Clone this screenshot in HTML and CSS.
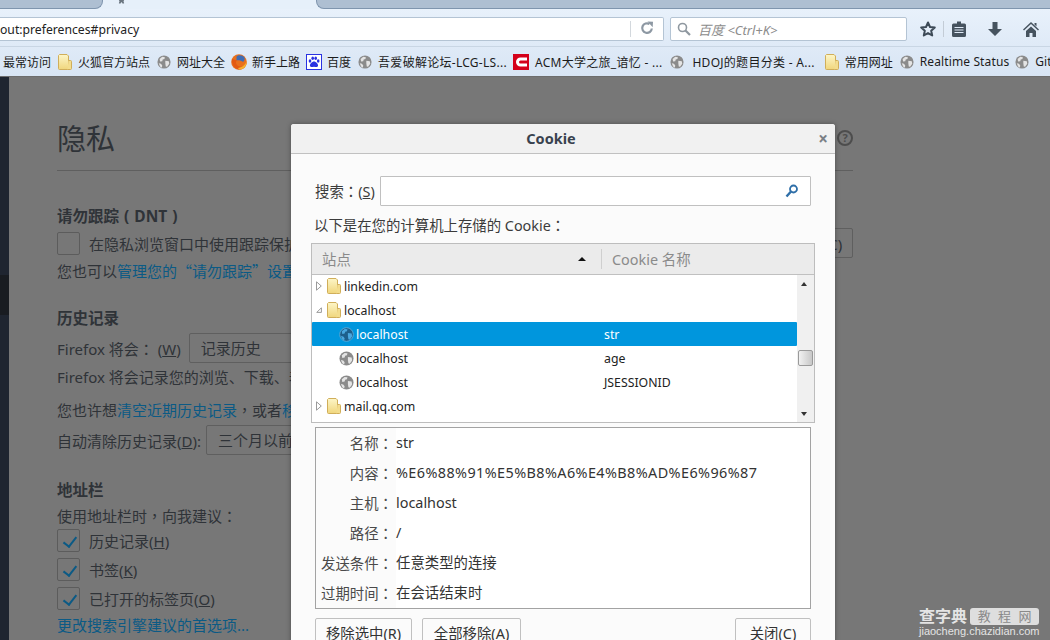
FILE: index.html
```html
<!DOCTYPE html>
<html lang="en">

<head>
    <meta charset="UTF-8">
    <title>Cookie</title>
    <link rel="stylesheet" href="styles.css">
</head>

<body>
    <svg class="defs" width="0" height="0">
        <defs>
            <linearGradient id="folderFill" x1="0" y1="0" x2="0" y2="1">
                <stop offset="0" stop-color="#fdf6c8" />
                <stop offset="1" stop-color="#f0d67c" />
            </linearGradient>
            <symbol id="folder" viewBox="0 0 14 16">
                <path d="M1.5.5h7.5l1.5 1.5v12.5a1 1 0 0 1-1 1h-8a1 1 0 0 1-1-1V1.500z" fill="url(#folderFill)" stroke="#d0ae5a" />
                <path d="M10.500 6.500h2a1 1 0 0 1 1 1v7a1 1 0 0 1-1 1h-3" fill="#f3dd8e" stroke="#d0ae5a" />
            </symbol>
            <symbol id="globe" viewBox="0 0 16 16">
                <circle cx="8" cy="8" r="7.500" fill="#8b8b8b" />
                <path d="M3 4.500 6 2l3 .5-.5 2-2 .5-.5 2-2.500.5zM9.500 6.500l4 .5.500 3-2.500 3.500-1.500-.5-.5-3.500zM2 9.500l2.500.5 1.500 2-.5 2.500-2-1.500z" fill="#e4e4e4" />
            </symbol>
            <symbol id="globe-on" viewBox="0 0 16 16">
                <circle cx="8" cy="8" r="7.300" fill="#1d5f8c" stroke="#5aa9d6" />
                <path d="M3 4.500 6 2l3 .5-.5 2-2 .5-.5 2-2.500.5zM9.500 6.500l4 .5.500 3-2.500 3.500-1.500-.5-.5-3.500zM2 9.500l2.500.5 1.500 2-.5 2.500-2-1.500z" fill="#4aa8e0" />
            </symbol>
            <symbol id="fox" viewBox="0 0 16 16">
                <circle cx="8" cy="8" r="7.800" fill="#e8701d" />
                <path d="M5.500 2.500C7 .8 11.500.8 13.500 3.500c.6 1.500 0 3.500-1.500 4.500-1.500-1.200-4-2-6.500-1.500z" fill="#3f6cb4" />
                <path d="M1 5c-.5 5 2.500 10.500 7.500 10.500S15.800 11 15.600 7.500c-.6 3-2.600 5-5.600 5-2.500 0-5-1.500-5-4 0-1 .5-1.800 1-2.300C4.500 6 3 5.500 1 5z" fill="#e35a12" />
                <path d="M8.500 15.500c4 0 7-3 7-7 0-.5 0-1-.1-1.500-.9 4.500-5 6.500-8.400 7 .5.800 1 1.500 1.500 1.500z" fill="#f6b12f" />
            </symbol>
            <symbol id="paw" viewBox="0 0 16 16">
                <rect x=".5" y=".5" width="15" height="15" fill="#fff" stroke="#2932e1" />
                <ellipse cx="4" cy="7" rx="1.300" ry="1.800" fill="#2932e1" />
                <ellipse cx="6.700" cy="4.300" rx="1.300" ry="1.800" fill="#2932e1" />
                <ellipse cx="9.700" cy="4.300" rx="1.300" ry="1.800" fill="#2932e1" />
                <ellipse cx="12.200" cy="7" rx="1.300" ry="1.800" fill="#2932e1" />
                <path d="M8 7.500c-2 0-4.500 2.500-4 4.500.5 1.500 2.500 1 4 .8 1.500.2 3.500.7 4-.8.500-2-2-4.500-4-4.500z" fill="#2932e1" />
            </symbol>
            <symbol id="redc" viewBox="0 0 16 16">
                <rect width="16" height="16" fill="#d4001a" />
                <path d="M14 5H7.500a3 3 0 0 0 0 6H14" fill="none" stroke="#fff" stroke-width="3" />
            </symbol>
            <symbol id="tw-closed" viewBox="0 0 6 10">
                <path d="M.5.8 5.300 5 .5 9.200z" fill="#fff" stroke="#9a9a9a" />
            </symbol>
            <symbol id="tw-open" viewBox="0 0 7 7">
                <path d="M6.300.9v5.400H.9z" fill="#fff" stroke="#8a8a8a" />
            </symbol>
        </defs>
    </svg>

    <div class="browser">
        <div class="tabstrip">
            <div class="tab tab-left"></div>
            <div class="tab-active">
                <svg class="pin" viewBox="0 0 10 6"><path d="M1 0h8L8 2l1 3-2 .5L5 3 3 5.500 1 5l1-3z" /></svg>
            </div>
            <div class="tab tab-right"></div>
        </div>

        <div class="navbar">
            <div class="urlbar">
                <span class="url">out:preferences#privacy</span>
                <span class="reload">
                    <svg viewBox="0 0 14 14" width="14" height="14"><path d="M11.800 7.500A4.800 4.800 0 1 1 9.500 3" fill="none" stroke="#8d98a3" stroke-width="2.200" /><path d="M7.500.5 13 .8l-.3 5.400z" fill="#8d98a3" /></svg>
                </span>
            </div>
            <div class="searchbar">
                <svg viewBox="0 0 14 14" width="14" height="14"><circle cx="5.500" cy="5.500" r="4" fill="none" stroke="#8f98a0" stroke-width="1.600" /><path d="m8.500 8.500 4.500 4.500" stroke="#8f98a0" stroke-width="2.200" /></svg>
                <span class="search-hint">百度 &lt;Ctrl+K&gt;</span>
            </div>
            <div class="tools">
                <svg class="tool-star" viewBox="0 0 16 16" width="16" height="16"><path d="m8 1.500 2 4.500 4.800.5-3.600 3.200 1 4.800L8 12.100l-4.200 2.400 1-4.800L1.200 6.500 6 6z" fill="none" stroke="#3d4a57" stroke-width="2" stroke-linejoin="round" /></svg>
                <span class="tool-sep"></span>
                <svg class="tool-list" viewBox="0 0 14 16" width="14" height="16"><path d="M5 .5h4v2h3.500a1.500 1.500 0 0 1 1.500 1.500v10.500a1.500 1.500 0 0 1-1.500 1.500h-11A1.500 1.500 0 0 1 0 14.500V4a1.500 1.500 0 0 1 1.500-1.500H5z" fill="#46535f" /><path d="M2.500 6.500h9M2.500 9h9M2.500 11.500h9" fill="none" stroke="#dfeaf7" stroke-width="1.200" /></svg>
                <svg class="tool-down" viewBox="0 0 14 14" width="14" height="14"><path d="M4.500 0h5v7H14l-7 7-7-7h4.500z" fill="#46535f" /></svg>
                <svg class="tool-home" viewBox="0 0 16 15" width="16" height="15"><path d="M8 0 0 7.500l1 1L8 2l7 6.500 1-1zM3 9l5-4.500L13 9v6H9.500v-4h-3v4H3zM11.500 1H13.500v3.500l-2-2z" fill="#46535f" /></svg>
            </div>
        </div>

        <div class="bookmarks">
            <span class="mark">最常访问</span>
            <span class="mark"><svg class="icon-folder"><use href="#folder" /></svg>火狐官方站点</span>
            <span class="mark"><svg class="icon-globe"><use href="#globe" /></svg>网址大全</span>
            <span class="mark mark-snug"><svg class="icon-square"><use href="#fox" /></svg>新手上路</span>
            <span class="mark mark-snug"><svg class="icon-square"><use href="#paw" /></svg>百度</span>
            <span class="mark mark-long"><svg class="icon-globe"><use href="#globe" /></svg>吾爱破解论坛-LCG-LS...</span>
            <span class="mark mark-long mark-red"><svg class="icon-square"><use href="#redc" /></svg>ACM大学之旅_谙忆 - ...</span>
            <span class="mark mark-long mark-hdoj"><svg class="icon-globe"><use href="#globe" /></svg>HDOJ的题目分类 - A...</span>
            <span class="mark mark-used"><svg class="icon-folder"><use href="#folder" /></svg>常用网址</span>
            <span class="mark mark-status"><svg class="icon-globe"><use href="#globe" /></svg>Realtime Status</span>
            <span class="mark mark-git"><svg class="icon-globe"><use href="#globe" /></svg>GitHub</span>
        </div>

        <div class="content">
            <div class="sidebar">
                <div class="sidebar-active"></div>
            </div>
            <div class="prefs">
                <div class="prefs-head">
                    <h1>隐私</h1>
                    <span class="help">?</span>
                </div>

                <h2 class="h-dnt">请勿跟踪 ( DNT )</h2>
                <div class="row row-dnt">
                    <label class="check-label"><span class="check"></span>在隐私浏览窗口中使用跟踪保护</label>
                    <button class="pref-btn">更改拦截列表(C)</button>
                </div>
                <p class="line line-note">您也可以<a>管理您的<span class="qt">“</span>请勿跟踪<span class="qt">”</span>设置</a></p>

                <h2 class="h-section">历史记录</h2>
                <div class="row row-history">
                    <span>Firefox 将会<span class="pn">：</span> (<u>W</u>)</span>
                    <span class="select">记录历史</span>
                </div>
                <p class="line line-a">Firefox 将会记录您的浏览、下载、表单和搜索历史</p>
                <p class="line line-b">您也许想<a>清空近期历史记录</a><span class="pn">，</span>或者<a>移除单个 Cookie</a></p>
                <div class="row row-clear">
                    <span>自动清除历史记录(<u>D</u>):</span>
                    <span class="select select-clear">三个月以前</span>
                </div>

                <h2 class="h-section">地址栏</h2>
                <p class="line line-hint">使用地址栏时<span class="pn">，</span>向我建议<span class="pn">：</span></p>
                <label class="check-row first"><span class="check on"></span>历史记录(<u>H</u>)</label>
                <label class="check-row second"><span class="check on"></span>书签(<u>K</u>)</label>
                <label class="check-row third"><span class="check on"></span>已打开的标签页(<u>O</u>)</label>
                <p class="line line-link"><a>更改搜索引擎建议的首选项...</a></p>
            </div>

            <div class="dialog">
                <div class="dialog-title">
                    <span>Cookie</span>
                    <span class="dialog-close">×</span>
                </div>
                <div class="dialog-body">
                    <div class="search-row">
                        <span class="search-label">搜索<span class="pn">：</span>(<u>S</u>)</span>
                        <div class="search-input">
                            <svg viewBox="0 0 14 14" width="14" height="14"><circle cx="8.500" cy="5" r="3.500" fill="none" stroke="#2f6fa8" stroke-width="1.800" /><path d="M6 7.500 1.500 12.500" stroke="#2f6fa8" stroke-width="2.400" /></svg>
                        </div>
                    </div>
                    <p class="cookie-intro">以下是在您的计算机上存储的 Cookie<span class="pn">：</span></p>

                    <div class="tree">
                        <div class="tree-head">
                            <div class="col-site">站点<span class="sort-up"></span></div>
                            <div class="col-name">Cookie 名称</div>
                        </div>
                        <div class="tree-main">
                            <div class="tree-list">
                                <div class="tree-row"><svg class="twisty"><use href="#tw-closed" /></svg><svg class="row-folder"><use href="#folder" /></svg>linkedin.com</div>
                                <div class="tree-row"><svg class="twisty"><use href="#tw-open" /></svg><svg class="row-folder"><use href="#folder" /></svg>localhost</div>
                                <div class="tree-row child selected"><svg class="row-icon"><use href="#globe-on" /></svg><span class="cell-site">localhost</span><span>str</span></div>
                                <div class="tree-row child"><svg class="row-icon"><use href="#globe" /></svg><span class="cell-site">localhost</span><span>age</span></div>
                                <div class="tree-row child"><svg class="row-icon"><use href="#globe" /></svg><span class="cell-site">localhost</span><span>JSESSIONID</span></div>
                                <div class="tree-row"><svg class="twisty"><use href="#tw-closed" /></svg><svg class="row-folder"><use href="#folder" /></svg>mail.qq.com</div>
                            </div>
                            <div class="scroller">
                                <span class="arrow arrow-up"></span>
                                <span class="thumb"></span>
                                <span class="arrow arrow-down"></span>
                            </div>
                        </div>
                    </div>

                    <div class="details">
                        <span class="d-label">名称<span class="pn">：</span></span><span class="d-value">str</span>
                        <span class="d-label">内容<span class="pn">：</span></span><span class="d-value d-long">%E6%88%91%E5%B8%A6%E4%B8%AD%E6%96%87</span>
                        <span class="d-label">主机<span class="pn">：</span></span><span class="d-value">localhost</span>
                        <span class="d-label">路径<span class="pn">：</span></span><span class="d-value">/</span>
                        <span class="d-label">发送条件<span class="pn">：</span></span><span class="d-value">任意类型的连接</span>
                        <span class="d-label">过期时间<span class="pn">：</span></span><span class="d-value">在会话结束时</span>
                    </div>

                    <div class="dialog-buttons">
                        <button class="dlg-btn btn-remove">移除选中(<u>R</u>)</button>
                        <button class="dlg-btn btn-all">全部移除(<u>A</u>)</button>
                        <button class="dlg-btn btn-close">关闭(<u>C</u>)</button>
                    </div>
                </div>
            </div>

            <div class="watermark">
                <div class="wm-top"><span class="wm-name">查字典</span><span class="wm-tag">教 程 网</span></div>
                <div class="wm-url">jiaocheng.chazidian.com</div>
            </div>
        </div>
    </div>
</body>

</html>
```
FILE: styles.css
```css
* {
    box-sizing: border-box;
}

html,
body {
    margin: 0;
    height: 640px;
    overflow: hidden;
}

body {
    font-family: "Noto Sans", "Noto Sans CJK SC", sans-serif;
    font-size: 14px;
    color: #333;
}

.defs {
    position: absolute;
}

/* centred full-width punctuation, quotes at full width */
.pn {
    font-family: "Noto Sans CJK TC", sans-serif;
}

.qt {
    font-family: "Noto Sans CJK SC", sans-serif;
}

.browser {
    width: 1050px;
    height: 640px;
    display: flex;
    flex-direction: column;
    overflow: hidden;
}

/* tabs */
.tabstrip {
    height: 9px;
    display: flex;
    background: #e6f0fa;
}

.tab {
    height: 9px;
    background: #aebfd2;
    border-bottom: 1px solid #7f95ae;
}

.tab-left {
    width: 103px;
    border-right: 1px solid #7f95ae;
    border-bottom-right-radius: 8px;
}

.tab-right {
    flex: 1;
    border-left: 1px solid #7f95ae;
    border-bottom-left-radius: 8px;
}

.tab-active {
    width: 213px;
    padding-left: 14px;
}

.pin {
    display: block;
    width: 9px;
    height: 4px;
    fill: #6b7680;
}

/* address + search */
.navbar {
    height: 38px;
    padding-top: 8px;
    display: flex;
    background: linear-gradient(#e8f1fb, #dfeaf7);
    border-bottom: 1px solid #c9d6e4;
}

.urlbar {
    width: 664px;
    height: 24px;
    display: flex;
    align-items: center;
    justify-content: space-between;
    background: #fff;
    border: 1px solid #b4c4d4;
    border-left: none;
    border-radius: 0 2px 2px 0;
}

.url {
    font-size: 12.2px;
    color: #222;
}

.reload {
    width: 33px;
    height: 16px;
    display: flex;
    justify-content: center;
    border-left: 1px solid #d3d8dd;
}

.searchbar {
    width: 237px;
    height: 24px;
    margin-left: 6px;
    padding-left: 6px;
    display: flex;
    align-items: center;
    gap: 7px;
    background: #fff;
    border: 1px solid #b4c4d4;
    border-radius: 2px;
}

.search-hint {
    font-size: 13px;
    font-style: italic;
    color: #8c8c8c;
}

.tools {
    flex: 1;
    display: flex;
    align-items: center;
    height: 24px;
}

.tool-star {
    margin-left: 13px;
}

.tool-sep {
    width: 1px;
    height: 16px;
    margin-left: 7px;
    background: #c3ccd6;
}

.tool-list {
    margin-left: 8px;
}

.tool-down {
    margin-left: 22px;
}

.tool-home {
    margin-left: 21px;
}

/* bookmarks */
.bookmarks {
    height: 29px;
    padding-left: 3px;
    display: flex;
    align-items: center;
    gap: 7px;
    background: linear-gradient(#dfeaf7, #d8e5f4);
    font-size: 12px;
    color: #1c1c1c;
    white-space: nowrap;
}

.mark {
    display: flex;
    align-items: center;
    gap: 6px;
    flex-shrink: 0;
}

.mark-snug {
    gap: 5px;
    margin-left: -1px;
}

.mark-long {
    letter-spacing: 0.28px;
}

.mark-red {
    margin-left: -1px;
}

.mark-hdoj {
    margin-left: 1px;
    gap: 8px;
}

.mark-used {
    margin-left: 3px;
}

.mark-status {
    letter-spacing: 0.13px;
}

.mark-git {
    margin-left: -1px;
}

.icon-folder {
    width: 14px;
    height: 16px;
}

.icon-globe {
    width: 14px;
    height: 14px;
}

.icon-square {
    width: 16px;
    height: 16px;
}

/* page behind the dialog */
.content {
    position: relative;
    flex: 1;
    display: flex;
    background: #777;
    border-top: 1px solid #6d6d6d;
    overflow: hidden;
}

.sidebar {
    width: 9px;
    background: #1f2530;
    padding-top: 198px;
}

.sidebar-active {
    height: 40px;
    background: #191c21;
}

.prefs {
    width: 844px;
    padding: 41px 0 0 48px;
    color: #2f3338;
    font-size: 15px;
}

.prefs a {
    color: #0b5a85;
}

.prefs-head {
    height: 53px;
    display: flex;
    justify-content: space-between;
    border-bottom: 1px solid #5f5f5f;
}

.prefs-head h1 {
    margin: 0;
    height: 40px;
    line-height: 42px;
    font-size: 29px;
    font-weight: 400;
}

.help {
    width: 16px;
    height: 16px;
    margin-top: 12px;
    border: 2px solid #4d4d4d;
    border-radius: 50%;
    font-size: 11px;
    font-weight: 700;
    line-height: 12px;
    text-align: center;
    color: #4d4d4d;
}

h2 {
    margin: 0;
    height: 24px;
    line-height: 26px;
    font-size: 15.5px;
    font-weight: 700;
    word-spacing: 1px;
}

.h-dnt {
    margin-top: 32px;
}

.h-section {
    margin-top: 22px;
}

.row {
    height: 30px;
    display: flex;
    align-items: center;
}

.row-dnt {
    margin-top: 1px;
    justify-content: space-between;
}

.row-history {
    margin-top: 4px;
    gap: 8px;
}

.row-clear {
    margin-top: 3px;
    gap: 5px;
}

.check-label,
.check-row {
    display: flex;
    align-items: center;
}

.check-row {
    height: 23px;
}

.check-row.first {
    margin-top: 1px;
}

.check-row.second,
.check-row.third {
    margin-top: 6px;
}

.check {
    position: relative;
    width: 23px;
    height: 23px;
    margin-right: 9px;
    border: 1px solid #5c5c5c;
    border-radius: 2px;
}

.check.on::after {
    content: "";
    position: absolute;
    left: 8px;
    top: 4px;
    width: 6px;
    height: 11px;
    border: solid #0b5a85;
    border-width: 0 2.5px 2.5px 0;
    transform: rotate(38deg);
}

.pref-btn {
    width: 130px;
    height: 30px;
    font: inherit;
    color: inherit;
    background: transparent;
    border: 1px solid #5f5f5f;
    border-radius: 2px;
}

.line {
    margin: 0;
    height: 24px;
    line-height: 24px;
    white-space: nowrap;
}

.line-note {
    margin-top: 1px;
}

.line-a {
    margin-top: 2px;
}

.line-b {
    margin-top: 9px;
}

.line-hint {
    margin-top: 3px;
}

.line-link {
    margin-top: 3px;
}

.select {
    width: 200px;
    height: 30px;
    padding-left: 11px;
    line-height: 28px;
    border: 1px solid #5f5f5f;
    border-radius: 2px;
}

/* dialog */
.dialog {
    position: absolute;
    left: 291px;
    top: 47px;
    width: 544px;
    height: 540px;
    background: #fbfbfb;
    font-size: 14.4px;
    border-radius: 3px 3px 0 0;
    box-shadow: 0 0 5px rgba(0, 0, 0, 0.35);
}

.dialog-title {
    position: relative;
    height: 30px;
    padding-right: 24px;
    line-height: 29px;
    text-align: center;
    font-weight: 700;
    font-size: 14.5px;
    color: #39424e;
    background: #f1f1f1;
    border-bottom: 1px solid #c1c1c1;
    border-radius: 3px 3px 0 0;
}

.dialog-close {
    position: absolute;
    right: 7px;
    top: 0;
    font-size: 17px;
    color: #7a7f85;
}

.dialog-body {
    padding: 22px 20px 0;
    color: #3b3b3b;
}

.search-row {
    margin-left: 4px;
    margin-right: 4px;
    display: flex;
    align-items: center;
    justify-content: space-between;
}

.search-label {
    margin-bottom: 2px;
}

.search-input {
    width: 431px;
    height: 30px;
    padding-right: 11px;
    display: flex;
    align-items: center;
    justify-content: flex-end;
    background: #fff;
    border: 1px solid #c0c0c0;
    border-radius: 1px;
}

.cookie-intro {
    margin: 8px 0 0 3px;
    height: 24px;
    line-height: 22px;
}

.tree {
    margin-top: 5px;
    height: 180px;
    border: 1px solid #bdbdbd;
    background: #fff;
    overflow: hidden;
}

.tree-head {
    height: 31px;
    padding-bottom: 1px;
    display: flex;
    align-items: center;
    background: #ebebeb;
    border-bottom: 1px solid #c0c0c0;
    color: #8a8a8a;
}

.col-site {
    width: 290px;
    height: 20px;
    padding: 0 15px 0 10px;
    display: flex;
    align-items: center;
    justify-content: space-between;
    border-right: 1px solid #cfcfcf;
}

.sort-up {
    width: 0;
    height: 0;
    border: solid transparent;
    border-width: 0 4px 4px;
    border-bottom-color: #111;
}

.col-name {
    padding-left: 10px;
}

.tree-main {
    display: flex;
    height: 147px;
}

.tree-list {
    flex: 1;
    font-size: 12.3px;
    color: #222;
}

.tree-row {
    height: 24px;
    display: flex;
    align-items: center;
}

.tree-row:first-child {
    height: 23px;
    padding-bottom: 1px;
}

.tree-row.child {
    padding-left: 27px;
}

.tree-row.selected {
    background: #0096dd;
    color: #fff;
    border-radius: 1px;
}

.twisty {
    width: 6px;
    height: 10px;
    margin-left: 4px;
    margin-right: 5px;
    flex-shrink: 0;
}

.row-folder {
    width: 14px;
    height: 16px;
    margin-right: 3px;
    flex-shrink: 0;
}

.row-icon {
    width: 15px;
    height: 15px;
    margin-right: 2px;
    flex-shrink: 0;
}

.cell-site {
    width: 248px;
}

.scroller {
    position: relative;
    width: 17px;
    background: #f0f0f0;
    display: flex;
    flex-direction: column;
    align-items: center;
}

.arrow {
    position: absolute;
    left: 4px;
    width: 0;
    height: 0;
    border: solid transparent;
}

.arrow-up {
    top: 7px;
    border-width: 0 3px 4px;
    border-bottom-color: #333;
}

.arrow-down {
    bottom: 6px;
    border-width: 4px 3px 0;
    border-top-color: #333;
}

.thumb {
    margin-top: 75px;
    width: 15px;
    height: 16px;
    background: linear-gradient(90deg, #f1f1f1, #c8c8c8);
    border: 1px solid #9a9a9a;
    border-radius: 2px;
}

.details {
    margin: 4px 4px 0;
    height: 182px;
    display: grid;
    grid-template-columns: 80px 1fr;
    grid-auto-rows: 30px;
    background: #fff;
    border: 1px solid #a3a3a3;
}

.d-label {
    padding-right: 3px;
    text-align: right;
    line-height: 30px;
    color: #4a4a4a;
    background: #fbfbfb;
    white-space: nowrap;
}

.d-value {
    line-height: 30px;
    color: #333;
}

.d-long {
    letter-spacing: 0.41px;
}

.dialog-buttons {
    margin: 9px 4px 0;
    display: flex;
}

.dlg-btn {
    height: 30px;
    padding: 0 0 1px;
    font: inherit;
    color: #333;
    background: #fbfbfb;
    border: 1px solid #c0c0c0;
    border-radius: 2px;
    white-space: nowrap;
}

.btn-remove {
    width: 97px;
}

.btn-all {
    width: 99px;
    margin-left: 10px;
}

.btn-close {
    width: 76px;
    margin-left: auto;
}

/* site watermark */
.watermark {
    position: absolute;
    right: 11px;
    bottom: 2px;
    width: 120px;
    color: #e4e4e4;
}

.wm-top {
    display: flex;
    align-items: center;
    gap: 3px;
}

.wm-name {
    font-size: 16px;
    font-weight: 700;
    line-height: 18px;
    white-space: nowrap;
}

.wm-tag {
    flex: 1;
    height: 17px;
    font-size: 13px;
    line-height: 17px;
    text-align: center;
    word-spacing: 4px;
    white-space: nowrap;
    color: #8a8a8a;
    background: #dedede;
    border-radius: 3px;
}

.wm-url {
    font-family: "Liberation Sans", sans-serif;
    font-size: 11px;
    line-height: 13px;
    white-space: nowrap;
}
```
